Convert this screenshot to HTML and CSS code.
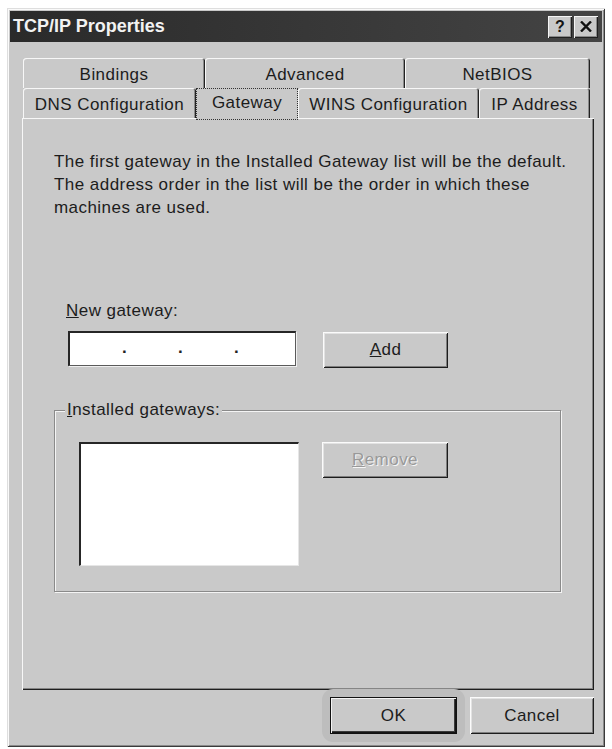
FILE: index.html
```html
<!DOCTYPE html>
<html lang="en">
<head>
<meta charset="utf-8">
<title>TCP/IP Properties</title>
<link rel="stylesheet" href="styles.css">
</head>
<body>
<div class="window">
  <div class="titlebar">
    <span class="title">TCP/IP Properties</span>
    <div class="tb-buttons">
      <div class="tb-btn help">?</div>
      <div class="tb-btn close">
        <svg width="12" height="11" viewBox="0 0 12 11"><path d="M1 0.5 L11 10.5 M11 0.5 L1 10.5" stroke="#111" stroke-width="2.4" fill="none"/></svg>
      </div>
    </div>
  </div>
  <div class="body">
    <div class="tabs">
      <div class="tab-row back">
        <div class="tab t-bind">Bindings</div>
        <div class="tab t-adv">Advanced</div>
        <div class="tab t-net">NetBIOS</div>
      </div>
      <div class="tab-row front">
        <div class="tab t-dns">DNS Configuration</div>
        <div class="tab t-gw selected">Gateway</div>
        <div class="tab t-wins">WINS Configuration</div>
        <div class="tab t-ip">IP Address</div>
      </div>
    </div>
    <div class="panel">
      <p class="desc">The first gateway in the Installed Gateway list will be the default.<br>The address order in the list will be the order in which these<br>machines are used.</p>
      <div class="field-label"><u>N</u>ew gateway:</div>
      <div class="gw-row">
        <div class="ip-input"><span>.</span><span>.</span><span>.</span></div>
        <div class="btn btn-add"><u>A</u>dd</div>
      </div>
      <fieldset class="group">
        <legend><u>I</u>nstalled gateways:</legend>
        <div class="group-row">
          <div class="listbox"></div>
          <div class="btn btn-remove disabled"><u>R</u>emove</div>
        </div>
      </fieldset>
    </div>
    <div class="footer">
      <div class="default-ring"><div class="btn btn-ok">OK</div></div>
      <div class="btn btn-cancel">Cancel</div>
    </div>
  </div>
</div>
</body>
</html>
```
FILE: styles.css
```css
* { box-sizing: border-box; }

body {
  margin: 0;
  background: #ffffff;
  font-family: "Liberation Sans", Arial, sans-serif;
  font-size: 17px;
  letter-spacing: 0.45px;
  color: #1c1c1c;
}

.window {
  margin: 8px 0 0 7px;
  width: 598px;
  height: 739px;
  background: #c9c9c9;
  padding: 3px;
  display: flex;
  flex-direction: column;
  box-shadow: inset 1px 1px #dedede, inset -1px -1px #3a3a3a,
              inset 2px 2px #fafafa, inset -2px -2px #8a8a8a;
}

.titlebar {
  height: 31px;
  flex: none;
  display: flex;
  align-items: center;
  justify-content: space-between;
  background: linear-gradient(90deg, #2a2a2a, #444444);
  padding: 0 4px 0 3px;
}

.title {
  color: #f2f2f2;
  font-weight: bold;
  font-size: 18px;
  letter-spacing: 0;
}

.tb-buttons {
  display: flex;
  gap: 2px;
}

.tb-btn {
  width: 24px;
  height: 22px;
  background: #c9c9c9;
  display: flex;
  align-items: center;
  justify-content: center;
  letter-spacing: 0;
  box-shadow: inset 1px 1px #f5f5f5, inset -1px -1px #202020, inset -2px -2px #8a8a8a;
}

.tb-btn.help {
  font-weight: bold;
  font-size: 16px;
  color: #151515;
  line-height: 22px;
}

.body {
  flex: 1;
  padding: 16px 8px 0 12px;
  display: flex;
  flex-direction: column;
}

.tabs {
  height: 60px;
  flex: none;
}

.tab-row {
  display: flex;
  height: 30px;
  padding-left: 1px;
  align-items: flex-start;
}

.tab {
  height: 30px;
  line-height: 28px;
  padding-top: 3px;
  text-align: center;
  white-space: nowrap;
  background: #c9c9c9;
  border-radius: 3px 3px 0 0;
  box-shadow: inset 1px 1px #f7f7f7, inset -1px 0 #222222, inset -2px 0 #8a8a8a;
}

.t-bind { width: 182px; }
.t-adv { width: 200px; }
.t-net { width: 185px; }
.t-dns { width: 173px; }
.t-gw { width: 102px; }
.t-wins { width: 181px; }
.t-ip { width: 111px; }

.tab.selected {
  position: relative;
  z-index: 1;
  height: 32px;
  margin-bottom: -2px;
  border-radius: 0;
  box-shadow: none;
  border: 1px dotted #333333;
  line-height: 26px;
  padding-top: 1px;
}

.panel {
  height: 572px;
  flex: none;
  padding: 32px 0 0 32px;
  box-shadow: inset 1px 1px #f7f7f7, inset -1px -1px #1e1e1e, inset -2px -2px #858585;
}

.desc {
  margin: 0;
  line-height: 23px;
  white-space: nowrap;
}

.field-label {
  margin: 81px 0 0 12px;
  line-height: 22px;
}

.gw-row {
  display: flex;
  align-items: flex-start;
  gap: 27px;
  margin: 9px 0 0 14px;
}

.ip-input {
  width: 228px;
  height: 35px;
  background: #ffffff;
  border-style: solid;
  border-width: 2px 1px 1px 2px;
  border-color: #262626 #5a5a5a #5a5a5a #262626;
  box-shadow: 1px 1px 0 #f0f0f0;
  display: flex;
  gap: 52px;
  padding-left: 52px;
  line-height: 30px;
  font-weight: bold;
  color: #222;
}

.ip-input span {
  width: 4px;
}

.btn {
  background: #c9c9c9;
  display: flex;
  align-items: center;
  justify-content: center;
  box-shadow: inset 1px 1px #fbfbfb, inset -1px -1px #1c1c1c,
              inset 2px 2px #e2e2e2, inset -2px -2px #7e7e7e;
}

.btn-add {
  width: 125px;
  height: 36px;
  margin-top: 1px;
}

.group {
  margin: 32px 0 0 0;
  padding: 0;
  width: 507px;
  min-inline-size: 0;
  border: 1px solid #8a8a8a;
  box-shadow: inset 1px 1px 0 #f4f4f4, 1px 1px 0 #f4f4f4;
}

.group legend {
  margin-left: 10px;
  padding: 0 2px;
  line-height: 20px;
  background: #c9c9c9;
}

.group-row {
  display: flex;
  align-items: flex-start;
  gap: 23px;
  padding: 22px 0 25px 24px;
}

.listbox {
  width: 220px;
  height: 124px;
  background: #ffffff;
  border-style: solid;
  border-width: 2px 1px 1px 2px;
  border-color: #262626 #e6e6e6 #e6e6e6 #262626;
}

.btn-remove {
  width: 126px;
  height: 36px;
}

.disabled {
  color: #999999;
  text-shadow: 1px 1px 0 #f6f6f6;
}

.footer {
  display: flex;
  justify-content: flex-end;
  align-items: flex-start;
  margin-top: 7px;
}

.default-ring {
  margin: -8px 5px -8px -8px;
  padding: 8px;
  border-radius: 11px;
  background: #bdbdbd;
}

.btn-ok {
  width: 127px;
  height: 37px;
  border: 1px solid #111111;
  box-shadow: inset 1px 1px #f4f4f4, inset -1px -1px #151515, inset -2px -2px #3a3a3a;
}

.btn-cancel {
  width: 124px;
  height: 37px;
}
```
